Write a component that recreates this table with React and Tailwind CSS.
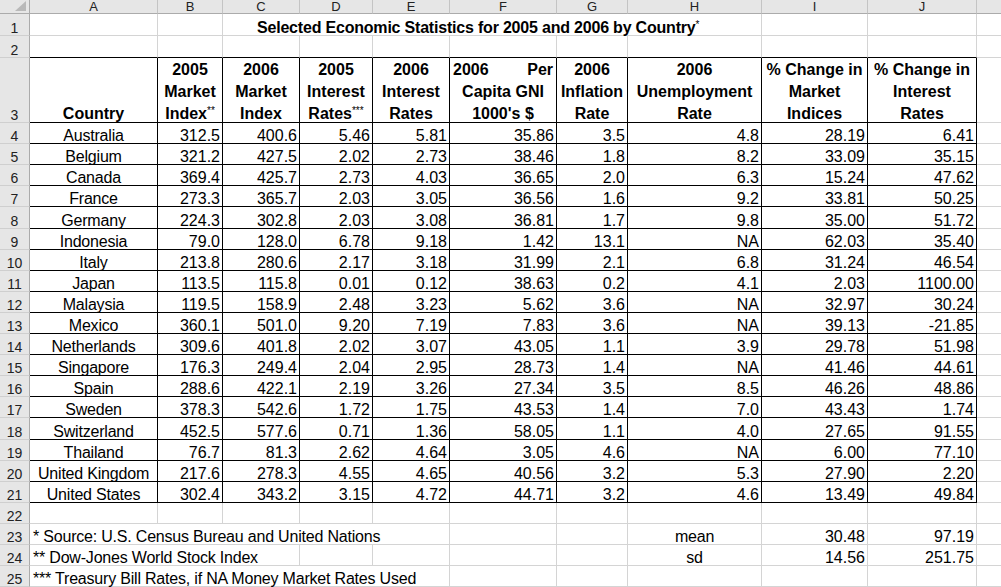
import React from 'react';

// 列宽与行号
const letters = ['A', 'B', 'C', 'D', 'E', 'F', 'G', 'H', 'I', 'J'];

const rows = [
  ['Australia', '312.5', '400.6', '5.46', '5.81', '35.86', '3.5', '4.8', '28.19', '6.41'],
  ['Belgium', '321.2', '427.5', '2.02', '2.73', '38.46', '1.8', '8.2', '33.09', '35.15'],
  ['Canada', '369.4', '425.7', '2.73', '4.03', '36.65', '2.0', '6.3', '15.24', '47.62'],
  ['France', '273.3', '365.7', '2.03', '3.05', '36.56', '1.6', '9.2', '33.81', '50.25'],
  ['Germany', '224.3', '302.8', '2.03', '3.08', '36.81', '1.7', '9.8', '35.00', '51.72'],
  ['Indonesia', '79.0', '128.0', '6.78', '9.18', '1.42', '13.1', 'NA', '62.03', '35.40'],
  ['Italy', '213.8', '280.6', '2.17', '3.18', '31.99', '2.1', '6.8', '31.24', '46.54'],
  ['Japan', '113.5', '115.8', '0.01', '0.12', '38.63', '0.2', '4.1', '2.03', '1100.00'],
  ['Malaysia', '119.5', '158.9', '2.48', '3.23', '5.62', '3.6', 'NA', '32.97', '30.24'],
  ['Mexico', '360.1', '501.0', '9.20', '7.19', '7.83', '3.6', 'NA', '39.13', '-21.85'],
  ['Netherlands', '309.6', '401.8', '2.02', '3.07', '43.05', '1.1', '3.9', '29.78', '51.98'],
  ['Singapore', '176.3', '249.4', '2.04', '2.95', '28.73', '1.4', 'NA', '41.46', '44.61'],
  ['Spain', '288.6', '422.1', '2.19', '3.26', '27.34', '3.5', '8.5', '46.26', '48.86'],
  ['Sweden', '378.3', '542.6', '1.72', '1.75', '43.53', '1.4', '7.0', '43.43', '1.74'],
  ['Switzerland', '452.5', '577.6', '0.71', '1.36', '58.05', '1.1', '4.0', '27.65', '91.55'],
  ['Thailand', '76.7', '81.3', '2.62', '4.64', '3.05', '4.6', 'NA', '6.00', '77.10'],
  ['United Kingdom', '217.6', '278.3', '4.55', '4.65', '40.56', '3.2', '5.3', '27.90', '2.20'],
  ['United States', '302.4', '343.2', '3.15', '4.72', '44.71', '3.2', '4.6', '13.49', '49.84'],
];

const Sup = ({ children }) => (
  <span className="relative -top-[5px] text-[10px] font-normal leading-none">{children}</span>
);

// 第3行表头（每列三行文字）
const headers = [
  [null, null, 'Country'],
  ['2005', 'Market', <>Index<Sup>**</Sup></>],
  ['2006', 'Market', 'Index'],
  ['2005', 'Interest', <>Rates<Sup>***</Sup></>],
  ['2006', 'Interest', 'Rates'],
  ['PER', 'Capita GNI', "1000's $"],
  ['2006', 'Inflation', 'Rate'],
  ['2006', 'Unemployment', 'Rate'],
  ['% Change in', 'Market', 'Indices'],
  ['% Change in', 'Interest', 'Rates'],
];

const grid = 'border-r border-b border-[#d4d4d4]';
const box = 'border-r border-b border-black';

const RowHead = ({ n }) => (
  <div className="flex items-end justify-center overflow-hidden border-r border-b border-r-[#ababab] border-b-[#cfcfcf] bg-[#e6e6e6] text-[14px] tracking-normal text-[#222]">
    <span className="leading-[14px]">{n}</span>
  </div>
);

const Blank = ({ className = '' }) => <div className={`${grid} ${className}`} />;

const Num = ({ v, boxed }) => (
  <div className={`${boxed ? box : grid} flex items-end justify-end pr-[2px] whitespace-nowrap tracking-normal`}>
    <span className="leading-[15px]">{v}</span>
  </div>
);

export default function App() {
  return (
    <div className="h-[587px] w-[1001px] overflow-hidden bg-white font-['Liberation_Sans',Arial,sans-serif] text-[16px] tracking-[-0.2px] text-black">
      <div className="grid grid-cols-[30px_128px_65px_77px_73px_77px_107px_71px_134px_106px_109px_1fr] grid-rows-[14px_22px_22px_65px_21px_21px_21px_21px_22px_21px_21px_21px_21px_21px_21px_21px_21px_21px_22px_21px_21px_21px_21px_21px_21px_21px]">
        {/* 列标题 */}
        <div className="flex items-end justify-end border-r border-b border-[#ababab] bg-[#e6e6e6] pr-[3px] pb-[2px]">
          <svg width="11" height="10" viewBox="0 0 11 10">
            <polygon points="11,0 11,10 0,10" fill="#b9b9b9" />
          </svg>
        </div>
        {letters.map((l) => (
          <div
            key={l}
            className="flex items-end justify-center overflow-hidden border-r border-b border-r-[#c4c4c4] border-b-[#ababab] bg-[#e6e6e6] text-[13px] tracking-normal text-[#222]"
          >
            <span className="leading-[13px]">{l}</span>
          </div>
        ))}
        <div className="border-b border-[#ababab] bg-[#e6e6e6]" />

        {/* 第1行：标题 */}
        <RowHead n={1} />
        <Blank />
        <Blank />
        <div className={`${grid} col-span-6 flex items-end whitespace-nowrap pl-[34px]`}>
          <span className="font-bold leading-[15px]">
            Selected Economic Statistics for 2005 and 2006 by Country<Sup>*</Sup>
          </span>
        </div>
        <Blank />
        <Blank />
        <div className="border-b border-[#d4d4d4]" />

        {/* 第2行 */}
        <RowHead n={2} />
        {letters.map((l) => (
          <div key={l} className="border-r border-b border-r-[#d4d4d4] border-b-black" />
        ))}
        <div className="border-b border-[#d4d4d4]" />

        {/* 第3行：表头 */}
        <RowHead n={3} />
        {headers.map((h, i) => (
          <div
            key={i}
            className={`${box} flex flex-col items-center justify-end font-bold leading-[22px] whitespace-nowrap tracking-normal`}
          >
            <div className="-mb-[3px] flex w-full flex-col items-center">
              {h[0] === 'PER' ? (
                <div className="flex w-full justify-between px-[3px]">
                  <span>2006</span>
                  <span>Per</span>
                </div>
              ) : (
                h[0] && <div>{h[0]}</div>
              )}
              {h[1] && <div>{h[1]}</div>}
              <div>{h[2]}</div>
            </div>
          </div>
        ))}
        <div className="border-b border-[#d4d4d4]" />

        {/* 数据行 */}
        {rows.map((r, i) => (
          <React.Fragment key={r[0]}>
            <RowHead n={i + 4} />
            <div className={`${box} flex items-end justify-center whitespace-nowrap`}>
              <span className="leading-[15px]">{r[0]}</span>
            </div>
            {r.slice(1).map((v, j) => (
              <Num key={j} v={v} boxed />
            ))}
            <div className="border-b border-[#d4d4d4]" />
          </React.Fragment>
        ))}

        {/* 第22行 */}
        <RowHead n={22} />
        {letters.map((l) => (
          <Blank key={l} />
        ))}
        <div className="border-b border-[#d4d4d4]" />

        {/* 第23行 */}
        <RowHead n={23} />
        <div className={`${grid} col-span-5 flex items-end whitespace-nowrap pl-[3px]`}>
          <span className="leading-[15px]">* Source: U.S. Census Bureau and United Nations</span>
        </div>
        <Blank />
        <Blank />
        <div className={`${grid} flex items-end justify-center`}>
          <span className="leading-[15px]">mean</span>
        </div>
        <Num v="30.48" />
        <Num v="97.19" />
        <div className="border-b border-[#d4d4d4]" />

        {/* 第24行 */}
        <RowHead n={24} />
        <div className={`${grid} col-span-3 flex items-end whitespace-nowrap pl-[3px]`}>
          <span className="leading-[15px]">** Dow-Jones World Stock Index</span>
        </div>
        <Blank />
        <Blank />
        <Blank />
        <Blank />
        <div className={`${grid} flex items-end justify-center`}>
          <span className="leading-[15px]">sd</span>
        </div>
        <Num v="14.56" />
        <Num v="251.75" />
        <div className="border-b border-[#d4d4d4]" />

        {/* 第25行 */}
        <RowHead n={25} />
        <div className={`${grid} col-span-5 flex items-end whitespace-nowrap pl-[3px]`}>
          <span className="leading-[15px]">*** Treasury Bill Rates, if NA Money Market Rates Used</span>
        </div>
        <Blank />
        <Blank />
        <Blank />
        <Blank />
        <Blank />
        <div className="border-b border-[#d4d4d4]" />
      </div>
    </div>
  );
}
